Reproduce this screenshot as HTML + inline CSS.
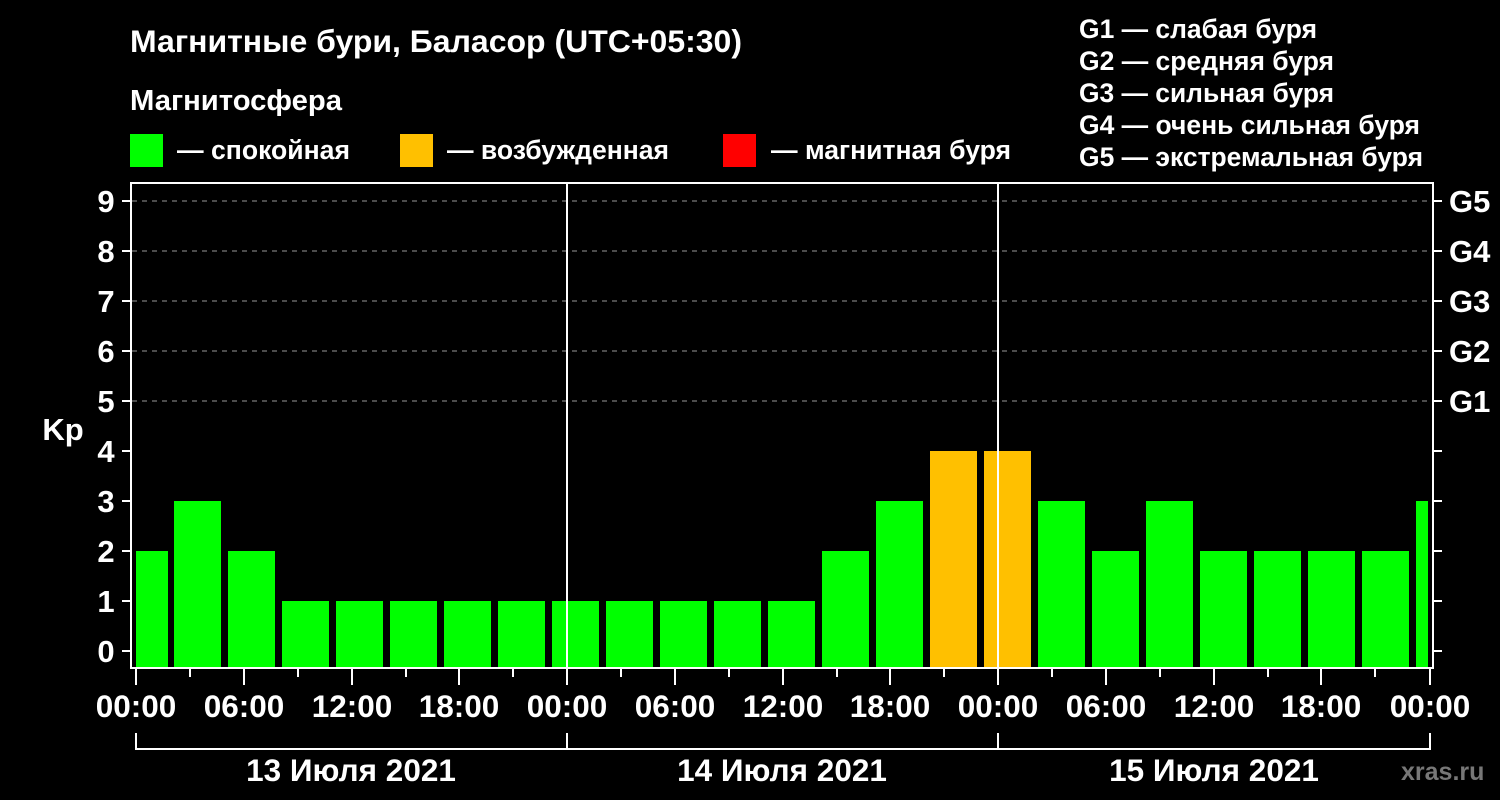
<!DOCTYPE html>
<html><head><meta charset="utf-8"><style>
html,body{margin:0;padding:0;background:#000;width:1500px;height:800px;overflow:hidden}
svg{display:block}
text{font-family:"Liberation Sans",sans-serif;font-weight:bold;fill:#fff}
</style></head><body>
<svg width="1500" height="800" viewBox="0 0 1500 800" xmlns="http://www.w3.org/2000/svg">
<text x="130" y="52" font-size="31.5" textLength="612" lengthAdjust="spacingAndGlyphs">Магнитные бури, Баласор (UTC+05:30)</text>
<text x="130" y="110" font-size="29" textLength="212" lengthAdjust="spacingAndGlyphs">Магнитосфера</text>
<rect x="130" y="134" width="33" height="33" fill="#00ff00"/>
<text x="177" y="159" font-size="26.5" textLength="173" lengthAdjust="spacingAndGlyphs">— спокойная</text>
<rect x="400" y="134" width="33" height="33" fill="#ffc000"/>
<text x="447" y="159" font-size="26.5" textLength="222" lengthAdjust="spacingAndGlyphs">— возбужденная</text>
<rect x="723" y="134" width="33" height="33" fill="#ff0000"/>
<text x="771" y="159" font-size="26.5" textLength="240" lengthAdjust="spacingAndGlyphs">— магнитная буря</text>
<g font-size="26.5">
<text x="1079" y="38" textLength="238" lengthAdjust="spacingAndGlyphs">G1 — слабая буря</text>
<text x="1079" y="70" textLength="255" lengthAdjust="spacingAndGlyphs">G2 — средняя буря</text>
<text x="1079" y="102" textLength="255" lengthAdjust="spacingAndGlyphs">G3 — сильная буря</text>
<text x="1079" y="134" textLength="341" lengthAdjust="spacingAndGlyphs">G4 — очень сильная буря</text>
<text x="1079" y="166" textLength="344" lengthAdjust="spacingAndGlyphs">G5 — экстремальная буря</text>
</g>
<g stroke="#999" stroke-width="1" stroke-dasharray="5,5">
<line x1="132" y1="201" x2="1432" y2="201"/><line x1="132" y1="251" x2="1432" y2="251"/>
<line x1="132" y1="301" x2="1432" y2="301"/><line x1="132" y1="351" x2="1432" y2="351"/>
<line x1="132" y1="401" x2="1432" y2="401"/>
</g>
<g id="bars">
<rect x="136" y="551" width="32" height="117" fill="#00ff00"/>
<rect x="174" y="501" width="47" height="167" fill="#00ff00"/>
<rect x="228" y="551" width="47" height="117" fill="#00ff00"/>
<rect x="282" y="601" width="47" height="67" fill="#00ff00"/>
<rect x="336" y="601" width="47" height="67" fill="#00ff00"/>
<rect x="390" y="601" width="47" height="67" fill="#00ff00"/>
<rect x="444" y="601" width="47" height="67" fill="#00ff00"/>
<rect x="498" y="601" width="47" height="67" fill="#00ff00"/>
<rect x="552" y="601" width="47" height="67" fill="#00ff00"/>
<rect x="606" y="601" width="47" height="67" fill="#00ff00"/>
<rect x="660" y="601" width="47" height="67" fill="#00ff00"/>
<rect x="714" y="601" width="47" height="67" fill="#00ff00"/>
<rect x="768" y="601" width="47" height="67" fill="#00ff00"/>
<rect x="822" y="551" width="47" height="117" fill="#00ff00"/>
<rect x="876" y="501" width="47" height="167" fill="#00ff00"/>
<rect x="930" y="451" width="47" height="217" fill="#ffc000"/>
<rect x="984" y="451" width="47" height="217" fill="#ffc000"/>
<rect x="1038" y="501" width="47" height="167" fill="#00ff00"/>
<rect x="1092" y="551" width="47" height="117" fill="#00ff00"/>
<rect x="1146" y="501" width="47" height="167" fill="#00ff00"/>
<rect x="1200" y="551" width="47" height="117" fill="#00ff00"/>
<rect x="1254" y="551" width="47" height="117" fill="#00ff00"/>
<rect x="1308" y="551" width="47" height="117" fill="#00ff00"/>
<rect x="1362" y="551" width="47" height="117" fill="#00ff00"/>
<rect x="1416" y="501" width="12" height="167" fill="#00ff00"/>
</g>
<g stroke="#fff" stroke-width="2" fill="none">
<rect x="131" y="183" width="1302" height="485"/>
<line x1="567" y1="183" x2="567" y2="668"/>
<line x1="998" y1="183" x2="998" y2="668"/>
<path d="M122 201h9M122 251h9M122 301h9M122 351h9M122 401h9M122 451h9M122 501h9M122 551h9M122 601h9M122 651h9"/>
<path d="M1433 201h9M1433 251h9M1433 301h9M1433 351h9M1433 401h9M1433 451h9M1433 501h9M1433 551h9M1433 601h9M1433 651h9"/>
<path d="M136 668v17M190 668v9M244 668v17M298 668v9M352 668v17M406 668v9M459 668v17M513 668v9M567 668v17M621 668v9M675 668v17M729 668v9M783 668v17M837 668v9M890 668v17M944 668v9M998 668v17M1052 668v9M1106 668v17M1160 668v9M1214 668v17M1268 668v9M1321 668v17M1375 668v9M1430 668v17"/>
<path d="M136 733v16H1430v-16M567 733v16M998 733v16"/>
</g>
<g font-size="31" text-anchor="middle">
<text x="106" y="212">9</text><text x="106" y="262">8</text><text x="106" y="312">7</text>
<text x="106" y="362">6</text><text x="106" y="412">5</text><text x="106" y="462">4</text>
<text x="106" y="512">3</text><text x="106" y="562">2</text><text x="106" y="612">1</text>
<text x="106" y="662">0</text>
<text x="63" y="440">Kp</text>
</g>
<g font-size="31">
<text x="1449" y="212">G5</text><text x="1449" y="262">G4</text><text x="1449" y="312">G3</text>
<text x="1449" y="362">G2</text><text x="1449" y="412">G1</text>
</g>
<g font-size="31.5" text-anchor="middle">
<text x="136" y="717">00:00</text><text x="244" y="717">06:00</text><text x="352" y="717">12:00</text>
<text x="459" y="717">18:00</text><text x="567" y="717">00:00</text><text x="675" y="717">06:00</text>
<text x="783" y="717">12:00</text><text x="890" y="717">18:00</text><text x="998" y="717">00:00</text>
<text x="1106" y="717">06:00</text><text x="1214" y="717">12:00</text><text x="1321" y="717">18:00</text>
<text x="1430" y="717">00:00</text>
<text x="351" y="781">13 Июля 2021</text>
<text x="782" y="781">14 Июля 2021</text>
<text x="1214" y="781">15 Июля 2021</text>
</g>
<text x="1401" y="780" font-size="25" style="fill:#777" text-anchor="start">xras.ru</text>
</svg>
</body></html>
